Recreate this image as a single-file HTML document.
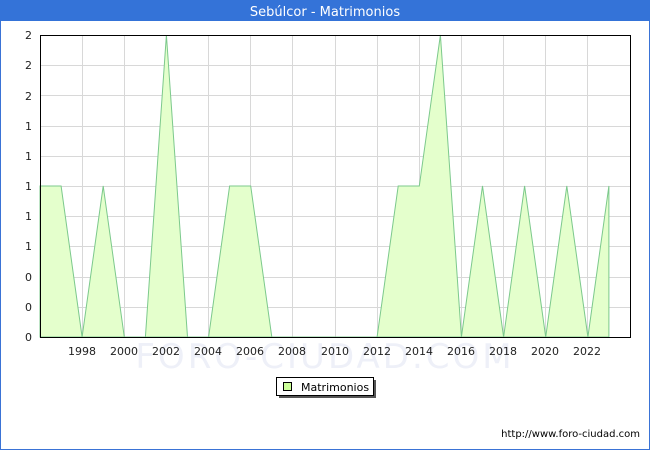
<!DOCTYPE html>
<html><head><meta charset="utf-8"><style>
html,body{margin:0;padding:0;width:650px;height:450px;overflow:hidden;background:#fff;font-family:"DejaVu Sans","Liberation Sans",sans-serif}
</style></head><body>
<svg width="650" height="450" xmlns="http://www.w3.org/2000/svg" font-family="DejaVu Sans, Liberation Sans, sans-serif">
<rect x="0.5" y="0.5" width="649" height="449" fill="#fff" stroke="#3a73d6"/>
<rect x="0" y="0" width="650" height="21" fill="#3473d8"/>
<text x="325" y="16" text-anchor="middle" font-size="13" fill="#fff">Sebúlcor - Matrimonios</text>
<g stroke="#d8d8d8" stroke-width="1">
<line x1="40" y1="65.5" x2="630" y2="65.5"/><line x1="40" y1="95.5" x2="630" y2="95.5"/><line x1="40" y1="126.5" x2="630" y2="126.5"/><line x1="40" y1="156.5" x2="630" y2="156.5"/><line x1="40" y1="186.5" x2="630" y2="186.5"/><line x1="40" y1="216.5" x2="630" y2="216.5"/><line x1="40" y1="246.5" x2="630" y2="246.5"/><line x1="40" y1="277.5" x2="630" y2="277.5"/><line x1="40" y1="307.5" x2="630" y2="307.5"/>
<line x1="82.5" y1="35" x2="82.5" y2="337"/><line x1="124.5" y1="35" x2="124.5" y2="337"/><line x1="166.5" y1="35" x2="166.5" y2="337"/><line x1="208.5" y1="35" x2="208.5" y2="337"/><line x1="250.5" y1="35" x2="250.5" y2="337"/><line x1="292.5" y1="35" x2="292.5" y2="337"/><line x1="335.5" y1="35" x2="335.5" y2="337"/><line x1="377.5" y1="35" x2="377.5" y2="337"/><line x1="419.5" y1="35" x2="419.5" y2="337"/><line x1="461.5" y1="35" x2="461.5" y2="337"/><line x1="503.5" y1="35" x2="503.5" y2="337"/><line x1="545.5" y1="35" x2="545.5" y2="337"/><line x1="587.5" y1="35" x2="587.5" y2="337"/>
</g>
<text x="325" y="368" text-anchor="middle" font-size="34" fill="#eef0f8" letter-spacing="3">FORO-CIUDAD.COM</text>
<polygon fill="#e4ffcc" stroke="#7cc98c" stroke-width="1" points="40,337 40,186 61.1,186 82.1,337 103.2,186 124.3,337 145.4,337 166.4,35 187.5,337 208.6,337 229.6,186 250.7,186 271.8,337 377.1,337 398.2,186 419.3,186 440.4,35 461.4,337 482.5,186 503.6,337 524.6,186 545.7,337 566.8,186 587.9,337 608.9,186 608.9,337"/>
<rect x="40.5" y="35.5" width="590" height="302" fill="none" stroke="#000"/>
<g font-size="11" fill="#222" text-anchor="end">
<text x="32" y="39">2</text><text x="32" y="69">2</text><text x="32" y="100">2</text><text x="32" y="130">1</text><text x="32" y="160">1</text><text x="32" y="190">1</text><text x="32" y="220">1</text><text x="32" y="250">1</text><text x="32" y="281">0</text><text x="32" y="311">0</text><text x="32" y="341">0</text>
</g>
<g font-size="11" fill="#222" text-anchor="middle">
<text x="82" y="355">1998</text><text x="124" y="355">2000</text><text x="166" y="355">2002</text><text x="208" y="355">2004</text><text x="250" y="355">2006</text><text x="292" y="355">2008</text><text x="335" y="355">2010</text><text x="377" y="355">2012</text><text x="419" y="355">2014</text><text x="461" y="355">2016</text><text x="503" y="355">2018</text><text x="545" y="355">2020</text><text x="587" y="355">2022</text>
</g>
<rect x="279" y="380" width="97" height="18" fill="#555"/>
<rect x="276.5" y="377.5" width="97" height="18" fill="#fff" stroke="#000"/>
<rect x="283.5" y="382.5" width="8" height="8" fill="#ccff99" stroke="#000"/>
<text x="301" y="391" font-size="11" fill="#000">Matrimonios</text>
<text x="640" y="437" text-anchor="end" font-size="10" fill="#000">http://www.foro-ciudad.com</text>
</svg>
</body></html>
